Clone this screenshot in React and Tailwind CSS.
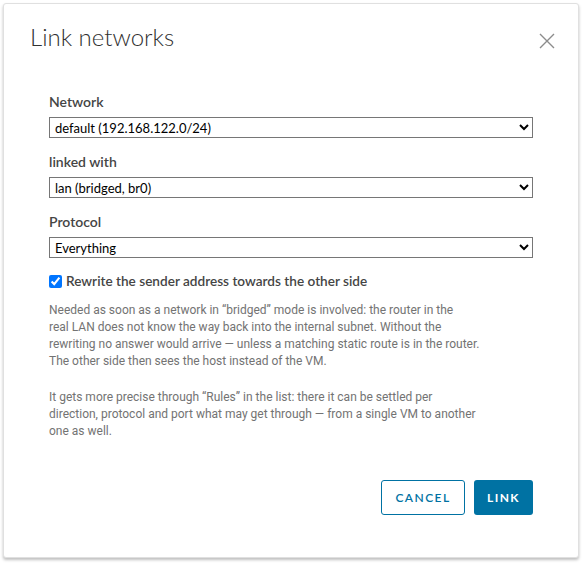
import { useState } from 'react';

const FONT = { fontFamily: 'Lato, "Noto Sans", sans-serif' };
const BODY_FONT = { fontFamily: 'Roboto, "Open Sans", sans-serif' };

const NOTE_1 = [
  'Needed as soon as a network in “bridged” mode is involved: the router in the',
  'real LAN does not know the way back into the internal subnet. Without the',
  'rewriting no answer would arrive — unless a matching static route is in the router.',
  'The other side then sees the host instead of the VM.',
];

const NOTE_2 = [
  'It gets more precise through “Rules” in the list: there it can be settled per',
  'direction, protocol and port what may get through — from a single VM to another',
  'one as well.',
];

const Field = ({ label, value, options, onChange }) => (
  <div className="flex flex-col">
    <label className="text-[14px] font-semibold text-[#454545] leading-[20px] mb-[5px]">{label}</label>
    <select
      value={value}
      onChange={(e) => onChange(e.target.value)}
      className="w-full h-[21px] border border-[#767676] bg-white text-[13px] text-black px-[1px] leading-[19px]"
    >
      {options.map((o) => (
        <option key={o}>{o}</option>
      ))}
    </select>
  </div>
);

const Note = ({ lines }) => (
  <p>
    {lines.map((l) => (
      <span key={l} className="block whitespace-nowrap">{l}</span>
    ))}
  </p>
);

export default function App() {
  const [network, setNetwork] = useState('default (192.168.122.0/24)');
  const [linked, setLinked] = useState('lan (bridged, br0)');
  const [protocol, setProtocol] = useState('Everything');
  const [rewrite, setRewrite] = useState(true);

  return (
    <div className="w-[582px] h-[564px] bg-white p-[3px] pb-[6px]" style={FONT}>
      <div className="h-full rounded-[3px] bg-white border border-[#e0e0e0] shadow-[0_2px_3px_rgba(0,0,0,0.25)] flex flex-col">
        {/* Header */}
        <div className="flex items-start justify-between pl-[26px] pr-[22px] pt-[18px]">
          <h2 className="text-[24px] font-light text-[#313131] leading-[30px]">Link networks</h2>
          <button className="mt-[10px] text-[#8c8c8c]">
            <svg width="18" height="18" viewBox="0 0 18 18" fill="none" stroke="currentColor" strokeWidth="1.4">
              <path d="M2 2 L16 16 M16 2 L2 16" />
            </svg>
          </button>
        </div>

        {/* Body */}
        <div className="flex flex-col px-[45px] pt-[40px]">
          <div className="flex flex-col gap-[14px]">
            <Field label="Network" value={network} onChange={setNetwork}
              options={['default (192.168.122.0/24)', 'isolated (10.0.0.0/24)']} />
            <Field label="linked with" value={linked} onChange={setLinked}
              options={['lan (bridged, br0)', 'default (192.168.122.0/24)']} />
            <Field label="Protocol" value={protocol} onChange={setProtocol}
              options={['Everything', 'TCP', 'UDP', 'ICMP']} />
          </div>

          <label className="flex items-center gap-[4px] mt-[13px]">
            <input
              type="checkbox"
              checked={rewrite}
              onChange={(e) => setRewrite(e.target.checked)}
              className="w-[13px] h-[13px] m-0 accent-[#0075ff]"
            />
            <span className="text-[13.6px] font-semibold text-[#454545] leading-[20px]">
              Rewrite the sender address towards the other side
            </span>
          </label>

          <div
            className="mt-[11px] text-[12px] leading-[17px] text-[#737373] flex flex-col gap-[19px]"
            style={BODY_FONT}
          >
            <Note lines={NOTE_1} />
            <Note lines={NOTE_2} />
          </div>
        </div>

        {/* Footer */}
        <div className="mt-auto flex justify-end gap-[9px] px-[45px] pb-[42px]">
          <button className="h-[35px] w-[84px] rounded-[3px] border border-[#0072a3] text-[#0072a3] text-[12px] font-semibold tracking-[0.12em] bg-white">
            CANCEL
          </button>
          <button className="h-[35px] w-[59px] rounded-[3px] bg-[#0072a3] text-white text-[12px] font-bold tracking-[0.12em]">
            LINK
          </button>
        </div>
      </div>
    </div>
  );
}
